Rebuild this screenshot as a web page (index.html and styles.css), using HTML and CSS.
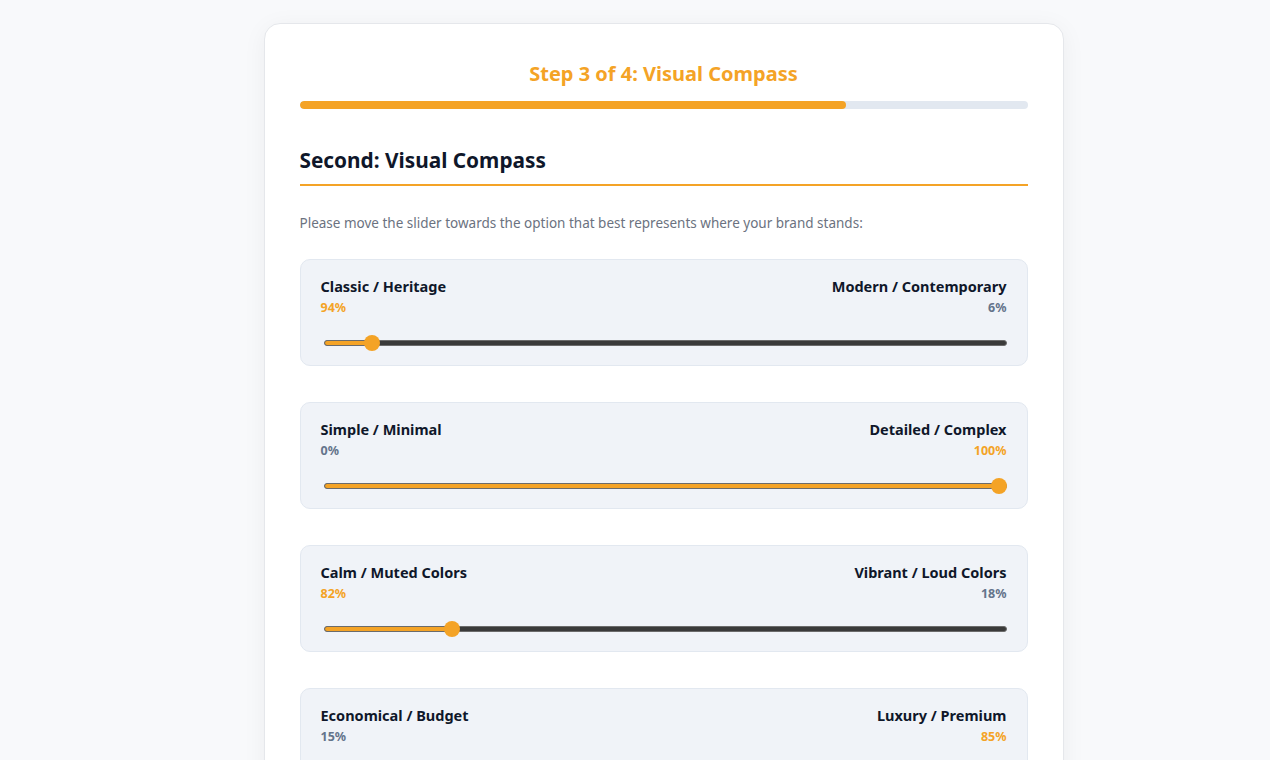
FILE: index.html
```html
<!DOCTYPE html>
<html lang="en">
<head>
<meta charset="utf-8">
<title>Brand Questionnaire – Visual Compass</title>
<link rel="stylesheet" href="styles.css">
</head>
<body>
<main class="wizard">
  <header class="wizard-head">
    <h1 class="step-title">Step 3 of 4: Visual Compass</h1>
    <div class="progress"><div class="progress-fill" style="width:75%"></div></div>
  </header>

  <section class="section">
    <h2 class="section-title">Second: Visual Compass</h2>
    <p class="section-intro">Please move the slider towards the option that best represents where your brand stands:</p>

    <div class="scales">
      <div class="scale">
        <div class="scale-labels">
          <div class="side">
            <span class="side-name">Classic / Heritage</span>
            <span class="side-pct active">94%</span>
          </div>
          <div class="side side-right">
            <span class="side-name">Modern / Contemporary</span>
            <span class="side-pct">6%</span>
          </div>
        </div>
        <div class="slider">
          <div class="track"><div class="track-fill" style="width:calc(8px + (100% - 16px) * 0.06)"></div></div>
          <span class="thumb" style="left:calc(8px + (100% - 16px) * 0.06)"></span>
        </div>
      </div>

      <div class="scale">
        <div class="scale-labels">
          <div class="side">
            <span class="side-name">Simple / Minimal</span>
            <span class="side-pct">0%</span>
          </div>
          <div class="side side-right">
            <span class="side-name">Detailed / Complex</span>
            <span class="side-pct active">100%</span>
          </div>
        </div>
        <div class="slider">
          <div class="track"><div class="track-fill" style="width:calc(8px + (100% - 16px) * 1)"></div></div>
          <span class="thumb" style="left:calc(8px + (100% - 16px) * 1)"></span>
        </div>
      </div>

      <div class="scale">
        <div class="scale-labels">
          <div class="side">
            <span class="side-name">Calm / Muted Colors</span>
            <span class="side-pct active">82%</span>
          </div>
          <div class="side side-right">
            <span class="side-name">Vibrant / Loud Colors</span>
            <span class="side-pct">18%</span>
          </div>
        </div>
        <div class="slider">
          <div class="track"><div class="track-fill" style="width:calc(8px + (100% - 16px) * 0.18)"></div></div>
          <span class="thumb" style="left:calc(8px + (100% - 16px) * 0.18)"></span>
        </div>
      </div>

      <div class="scale">
        <div class="scale-labels">
          <div class="side">
            <span class="side-name">Economical / Budget</span>
            <span class="side-pct">15%</span>
          </div>
          <div class="side side-right">
            <span class="side-name">Luxury / Premium</span>
            <span class="side-pct active">85%</span>
          </div>
        </div>
        <div class="slider">
          <div class="track"><div class="track-fill" style="width:calc(8px + (100% - 16px) * 0.85)"></div></div>
          <span class="thumb" style="left:calc(8px + (100% - 16px) * 0.85)"></span>
        </div>
      </div>
    </div>
  </section>
</main>
</body>
</html>
```

FILE: styles.css
```css
* { box-sizing: border-box; }

html, body {
  margin: 0;
  padding: 0;
}

body {
  background: #f8f9fb;
  font-family: "Noto Sans", "Open Sans", sans-serif;
  color: #0f172a;
  padding: 23px 0 0 57px;
}

.wizard {
  width: 800px;
  margin: 0 auto;
  background: #ffffff;
  border: 1px solid #e5e7eb;
  border-radius: 16px;
  box-shadow: 0 4px 24px rgba(15, 23, 42, 0.05);
  padding: 36px 35px 40px;
}

.step-title {
  margin: 0;
  text-align: center;
  color: #f4a326;
  font-size: 20px;
  font-weight: 700;
  line-height: 28px;
}

.progress {
  margin-top: 13px;
  height: 8px;
  border-radius: 4px;
  background: #e2e8f0;
  overflow: hidden;
}

.progress-fill {
  height: 100%;
  background: #f4a326;
  border-radius: 4px;
}

.section { margin-top: 36px; }

.section-title {
  margin: 0;
  font-size: 20.8px;
  font-weight: 700;
  line-height: 30px;
  color: #0f172a;
  padding-bottom: 9px;
  border-bottom: 2px solid #f4a326;
}

.section-intro {
  margin: 27px 0 0;
  font-size: 13.5px;
  line-height: 20px;
  color: #6b7280;
}

.scales {
  margin-top: 26px;
  display: flex;
  flex-direction: column;
  gap: 36px;
}

.scale {
  background: #f0f3f8;
  border: 1px solid #e2e8f0;
  border-radius: 10px;
  padding: 16px 20px 14px;
}

.scale-labels {
  display: flex;
  justify-content: space-between;
}

.side {
  display: flex;
  flex-direction: column;
  gap: 4px;
}

.side-right { align-items: flex-end; }

.side-name {
  font-size: 14.5px;
  font-weight: 700;
  line-height: 20px;
  color: #0f172a;
}

.side-pct {
  font-size: 12.5px;
  font-weight: 700;
  line-height: 16px;
  color: #64748b;
}

.side-pct.active { color: #f4a326; }

.slider {
  position: relative;
  margin: 19px 0 0 3px;
  height: 16px;
  display: flex;
  align-items: center;
}

.track {
  width: 100%;
  height: 6px;
  border: 1px solid #6b6b6b;
  border-radius: 3px;
  background: #3a3a3a;
  overflow: hidden;
}

.track-fill {
  height: 100%;
  background: #f4a326;
}

.thumb {
  position: absolute;
  top: 0;
  width: 16px;
  height: 16px;
  margin-left: -8px;
  border-radius: 50%;
  background: #f4a326;
}
```
